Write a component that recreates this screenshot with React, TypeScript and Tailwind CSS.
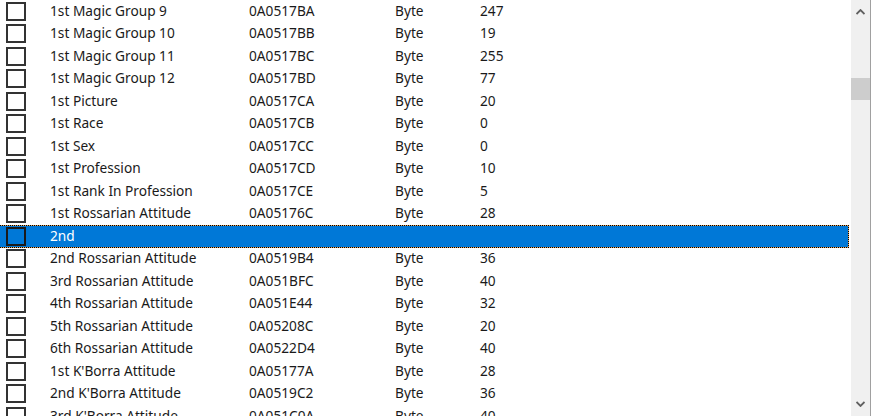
const rows: [string, string, string, string][] = [
  ["1st Magic Group 9", "0A0517BA", "Byte", "247"],
  ["1st Magic Group 10", "0A0517BB", "Byte", "19"],
  ["1st Magic Group 11", "0A0517BC", "Byte", "255"],
  ["1st Magic Group 12", "0A0517BD", "Byte", "77"],
  ["1st Picture", "0A0517CA", "Byte", "20"],
  ["1st Race", "0A0517CB", "Byte", "0"],
  ["1st Sex", "0A0517CC", "Byte", "0"],
  ["1st Profession", "0A0517CD", "Byte", "10"],
  ["1st Rank In Profession", "0A0517CE", "Byte", "5"],
  ["1st Rossarian Attitude", "0A05176C", "Byte", "28"],
  ["2nd", "", "", ""],
  ["2nd Rossarian Attitude", "0A0519B4", "Byte", "36"],
  ["3rd Rossarian Attitude", "0A051BFC", "Byte", "40"],
  ["4th Rossarian Attitude", "0A051E44", "Byte", "32"],
  ["5th Rossarian Attitude", "0A05208C", "Byte", "20"],
  ["6th Rossarian Attitude", "0A0522D4", "Byte", "40"],
  ["1st K'Borra Attitude", "0A05177A", "Byte", "28"],
  ["2nd K'Borra Attitude", "0A0519C2", "Byte", "36"],
  ["3rd K'Borra Attitude", "0A051C0A", "Byte", "40"],
];

const Cells = ({ row, selected }: { row: [string, string, string, string]; selected: boolean }) => (
  <>
    <div className="w-[50px] shrink-0 flex items-center pl-[6px]">
      <div
        className={
          "w-[20px] h-[19px] border-2 " +
          (selected ? "border-[#1a1a1a]" : "border-[#333333] bg-white")
        }
      />
    </div>
    <div className="w-[199px] shrink-0 whitespace-nowrap">{row[0]}</div>
    <div className="w-[146px] shrink-0">{row[1]}</div>
    <div className="w-[85px] shrink-0">{row[2]}</div>
    <div>{row[3]}</div>
  </>
);

export default function App() {
  return (
    <div
      className="w-[871px] h-[416px] flex bg-white overflow-hidden text-[13.7px] text-[#1a1a1a]"
      style={{ fontFamily: "'Noto Sans', 'Open Sans', sans-serif" }}
    >
      <div className="w-[851px] shrink-0 flex flex-col">
        {rows.map((row, i) =>
          i === 10 ? (
            <div
              key={i}
              className="h-[22.5px] shrink-0 w-[849px] border border-dotted border-black bg-[#e9a45a]"
            >
              <div className="h-full flex items-center bg-[#0078d7] text-white -ml-px">
                <Cells row={row} selected />
              </div>
            </div>
          ) : (
            <div key={i} className="h-[22.5px] shrink-0 flex items-center">
              <Cells row={row} selected={false} />
            </div>
          )
        )}
      </div>
      <div className="w-[20px] shrink-0 flex flex-col bg-[#f0f0f0] border-r border-[#a0a0a0]">
        <div className="h-[24px] flex items-center justify-center">
          <svg width="9" height="6" viewBox="0 0 9 6">
            <path d="M0.5 5 L4.5 1 L8.5 5" fill="none" stroke="#606060" strokeWidth="1.8" />
          </svg>
        </div>
        <div className="flex-1 flex flex-col pt-[54px]">
          <div className="h-[22px] bg-[#cdcdcd]" />
        </div>
        <div className="h-[24px] flex items-center justify-center">
          <svg width="9" height="6" viewBox="0 0 9 6">
            <path d="M0.5 1 L4.5 5 L8.5 1" fill="none" stroke="#606060" strokeWidth="1.8" />
          </svg>
        </div>
      </div>
    </div>
  );
}
